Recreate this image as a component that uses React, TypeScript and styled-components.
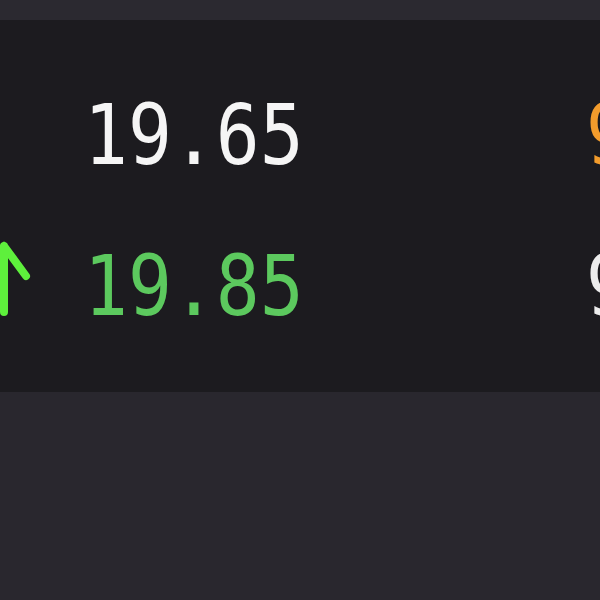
import React, { FC } from "react";
import styled, { createGlobalStyle } from "styled-components";

const GlobalStyle = createGlobalStyle`
  html, body {
    margin: 0;
    padding: 0;
    background-color: #29272e;
  }
  #root {
    width: 600px;
    height: 600px;
    overflow: hidden;
  }
`;

const Page = styled.div`
  display: flex;
  flex-direction: column;
  width: 600px;
  height: 600px;
  background-color: #29272e;
`;

const TopBar = styled.div`
  height: 20px;
  background-color: #2b2930;
`;

const Panel = styled.div`
  display: flex;
  flex-direction: column;
  gap: 89px;
  height: 372px;
  padding-top: 84px;
  box-sizing: border-box;
  background-color: #1c1b1f;
  overflow: hidden;
`;

const Row = styled.div`
  display: grid;
  grid-template-columns: 60px 1fr auto;
  align-items: center;
  height: 62px;
  margin-left: -26px;
  margin-right: -74px;
`;

const ArrowCell = styled.div`
  display: flex;
  align-items: center;
  height: 62px;
`;

interface IValueProps {
  tone: string;
}
const Price = styled.span<IValueProps>`
  display: inline-block;
  margin-left: 50px;
  font-family: "DejaVu Sans Mono", monospace;
  font-size: 73px;
  line-height: 62px;
  color: ${({ tone }): string => tone};
  transform: scaleY(1.15);
`;

const Side = styled.span<IValueProps>`
  display: inline-block;
  font-family: "DejaVu Sans Mono", monospace;
  font-size: 73px;
  line-height: 62px;
  color: ${({ tone }): string => tone};
  transform: scaleY(1.15);
`;

const ArrowSvg = styled.svg`
  overflow: visible;
`;

const UpArrow: FC = () => (
  <ArrowSvg width="60" height="80" viewBox="0 0 60 80">
    <path
      d="M30 0 V66 M30 0 L52 30 M30 0 L8 30"
      fill="none"
      stroke="#5ef03c"
      strokeWidth="8"
      strokeLinecap="round"
      strokeLinejoin="round"
    />
  </ArrowSvg>
);

interface IQuote {
  price: string;
  side: string;
  priceTone: string;
  sideTone: string;
  up: boolean;
}

const quotes: IQuote[] = [
  { price: "19.65", side: "9.", priceTone: "#f5f5f5", sideTone: "#f39c2c", up: false },
  { price: "19.85", side: "9.", priceTone: "#5cc95e", sideTone: "#ececec", up: true },
];

const App: FC = () => (
  <>
    <GlobalStyle />
    <Page>
      <TopBar />
      <Panel>
        {quotes.map((q) => (
          <Row key={q.price}>
            <ArrowCell>{q.up ? <UpArrow /> : null}</ArrowCell>
            <Price tone={q.priceTone}>{q.price}</Price>
            <Side tone={q.sideTone}>{q.side}</Side>
          </Row>
        ))}
      </Panel>
    </Page>
  </>
);

export default App;
